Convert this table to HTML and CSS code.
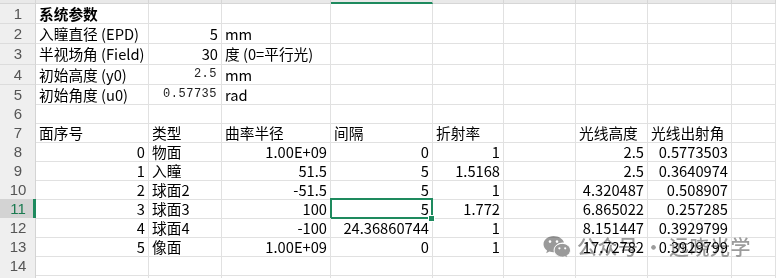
FILE: index.html
```html
<!DOCTYPE html>
<html lang="zh-CN">
<head>
<meta charset="utf-8">
<link rel="stylesheet" href="styles.css">
</head>
<body>
<div class="sheet">
  <div class="row strip">
    <div class="hc corner"></div><div class="hc"></div><div class="hc"></div><div class="hc"></div><div class="hc sel"></div><div class="hc"></div><div class="hc"></div><div class="hc"></div><div class="hc"></div><div class="hc"></div>
  </div>
  <div class="row r20">
    <div class="rh">1</div><div class="c b">系统参数</div><div class="c"></div><div class="c"></div><div class="c"></div><div class="c"></div><div class="c"></div><div class="c"></div><div class="c"></div><div class="c"></div>
  </div>
  <div class="row r20">
    <div class="rh">2</div><div class="c">入瞳直径 (EPD)</div><div class="c n">5</div><div class="c">mm</div><div class="c"></div><div class="c"></div><div class="c"></div><div class="c"></div><div class="c"></div><div class="c"></div>
  </div>
  <div class="row r21">
    <div class="rh">3</div><div class="c">半视场角 (Field)</div><div class="c n">30</div><div class="c">度 (0=平行光)</div><div class="c"></div><div class="c"></div><div class="c"></div><div class="c"></div><div class="c"></div><div class="c"></div>
  </div>
  <div class="row r20">
    <div class="rh">4</div><div class="c">初始高度 (y0)</div><div class="c n mono">2.5</div><div class="c">mm</div><div class="c"></div><div class="c"></div><div class="c"></div><div class="c"></div><div class="c"></div><div class="c"></div>
  </div>
  <div class="row">
    <div class="rh">5</div><div class="c">初始角度 (u0)</div><div class="c n mono">0.57735</div><div class="c">rad</div><div class="c"></div><div class="c"></div><div class="c"></div><div class="c"></div><div class="c"></div><div class="c"></div>
  </div>
  <div class="row">
    <div class="rh">6</div><div class="c"></div><div class="c"></div><div class="c"></div><div class="c"></div><div class="c"></div><div class="c"></div><div class="c"></div><div class="c"></div><div class="c"></div>
  </div>
  <div class="row">
    <div class="rh">7</div><div class="c">面序号</div><div class="c">类型</div><div class="c">曲率半径</div><div class="c">间隔</div><div class="c">折射率</div><div class="c"></div><div class="c">光线高度</div><div class="c">光线出射角</div><div class="c"></div>
  </div>
  <div class="row">
    <div class="rh">8</div><div class="c n">0</div><div class="c">物面</div><div class="c n">1.00E+09</div><div class="c n">0</div><div class="c n">1</div><div class="c"></div><div class="c n">2.5</div><div class="c n">0.5773503</div><div class="c"></div>
  </div>
  <div class="row">
    <div class="rh">9</div><div class="c n">1</div><div class="c">入瞳</div><div class="c n">51.5</div><div class="c n">5</div><div class="c n">1.5168</div><div class="c"></div><div class="c n">2.5</div><div class="c n">0.3640974</div><div class="c"></div>
  </div>
  <div class="row">
    <div class="rh">10</div><div class="c n">2</div><div class="c">球面2</div><div class="c n">-51.5</div><div class="c n">5</div><div class="c n">1</div><div class="c"></div><div class="c n">4.320487</div><div class="c n">0.508907</div><div class="c"></div>
  </div>
  <div class="row">
    <div class="rh act">11</div><div class="c n">3</div><div class="c">球面3</div><div class="c n">100</div><div class="c n cur">5</div><div class="c n">1.772</div><div class="c"></div><div class="c n">6.865022</div><div class="c n">0.257285</div><div class="c"></div>
  </div>
  <div class="row">
    <div class="rh">12</div><div class="c n">4</div><div class="c">球面4</div><div class="c n">-100</div><div class="c n">24.36860744</div><div class="c n">1</div><div class="c"></div><div class="c n">8.151447</div><div class="c n">0.3929799</div><div class="c"></div>
  </div>
  <div class="row">
    <div class="rh">13</div><div class="c n">5</div><div class="c">像面</div><div class="c n">1.00E+09</div><div class="c n">0</div><div class="c n">1</div><div class="c"></div><div class="c n">17.72782</div><div class="c n">0.3929799</div><div class="c"></div>
  </div>
  <div class="row">
    <div class="rh">14</div><div class="c"></div><div class="c"></div><div class="c"></div><div class="c"></div><div class="c"></div><div class="c"></div><div class="c"></div><div class="c"></div><div class="c"></div>
  </div>
  <div class="row">
    <div class="rh"></div><div class="c"></div><div class="c"></div><div class="c"></div><div class="c"></div><div class="c"></div><div class="c"></div><div class="c"></div><div class="c"></div><div class="c"></div>
  </div>
</div>
<div class="watermark">
  <svg class="wx" width="28" height="24" viewBox="0 0 28 24">
    <path d="M10.5 1C4.9 1 0.5 4.7 0.5 9.2c0 2.6 1.4 4.8 3.6 6.3l-0.9 2.8 3.2-1.7c1.3 0.4 2.6 0.6 4.1 0.6 0.3 0 0.6 0 0.9 0-0.2-0.7-0.3-1.4-0.3-2.1 0-4.2 4-7.5 9-7.5 0.3 0 0.6 0 0.9 0C20.1 3.9 15.7 1 10.5 1z" fill="#9a9a9a"/>
    <circle cx="7" cy="6.6" r="1.3" fill="#fff"/>
    <circle cx="14" cy="6.6" r="1.3" fill="#fff"/>
    <path d="M27.5 15.2c0-3.8-3.7-6.8-8.2-6.8s-8.2 3-8.2 6.8 3.7 6.8 8.2 6.8c0.9 0 1.9-0.1 2.7-0.4l2.6 1.4-0.7-2.3c2.2-1.3 3.6-3.2 3.6-5.5z" fill="#9a9a9a" stroke="#fff" stroke-width="1"/>
    <circle cx="16.4" cy="13.3" r="1.1" fill="#fff"/>
    <circle cx="22.2" cy="13.3" r="1.1" fill="#fff"/>
  </svg>
  <span class="wt">公众号 · 远晓光学</span>
</div>
</body>
</html>
```
FILE: styles.css
```css
html, body {
  margin: 0;
  padding: 0;
  background: #fff;
}
body {
  width: 776px;
  height: 278px;
  overflow: hidden;
  position: relative;
  font-family: "Noto Sans CJK SC", "Liberation Sans", sans-serif;
  font-size: 14.7px;
  color: #000;
}
.sheet {
  display: flex;
  flex-direction: column;
}
.row {
  display: grid;
  grid-template-columns: 36px 113px 73px 109px 102px 71px 72px 72px 84px 1fr;
  height: 19px;
}
.row.r20 { height: 20px; }
.row.r21 { height: 21px; }
.row.strip { height: 4px; }
.hc {
  background: #e9e9e9;
  border-right: 1px solid #d6d6d6;
  border-bottom: 1px solid #d6d6d6;
  box-sizing: border-box;
}
.hc.sel {
  border-bottom: 2px solid #1e8a5e;
}
.rh {
  background: #efefef;
  color: #555;
  text-align: center;
  border-right: 1px solid #d4d4d4;
  border-bottom: 1px solid #dcdcdc;
  box-sizing: border-box;
  font-family: "Liberation Sans", sans-serif;
  font-size: 15px;
  line-height: 19px;
  padding-left: 1px;
}
.rh.act {
  background: #d3d3d3;
  color: #1a7a50;
  border-right: 3px solid #1e8a5e;
  padding-left: 3px;
}
.c {
  border-right: 1px solid #e1e1e1;
  border-bottom: 1px solid #e1e1e1;
  box-sizing: border-box;
  padding: 0 3px 0 3px;
  white-space: nowrap;
  overflow: visible;
  line-height: 19px;
  position: relative;
  min-width: 0;
}
.c.b {
  font-weight: bold;
}
.c.n {
  text-align: right;
}
.c.mono {
  font-family: "Liberation Mono", monospace;
  font-size: 12px;
  letter-spacing: 0.5px;
  color: #222;
  padding-right: 4px;
}
.c.cur::after {
  content: "";
  position: absolute;
  left: -1px;
  top: -1px;
  right: -1px;
  bottom: -1px;
  border: 2px solid #1e8a5e;
  pointer-events: none;
}
.c.cur::before {
  content: "";
  position: absolute;
  right: -3px;
  bottom: -4px;
  width: 5px;
  height: 5px;
  background: #1e8a5e;
  border: 1px solid #fff;
  z-index: 2;
}
.watermark {
  position: absolute;
  left: 543px;
  top: 234px;
  display: flex;
  align-items: center;
  gap: 6px;
  z-index: 5;
  mix-blend-mode: multiply;
}
.wx {
  display: block;
}
.wt {
  font-family: "Noto Sans CJK SC", sans-serif;
  font-size: 20px;
  font-weight: 500;
  color: #9c9c9c;
  letter-spacing: 0.5px;
  line-height: 26px;
}
```
